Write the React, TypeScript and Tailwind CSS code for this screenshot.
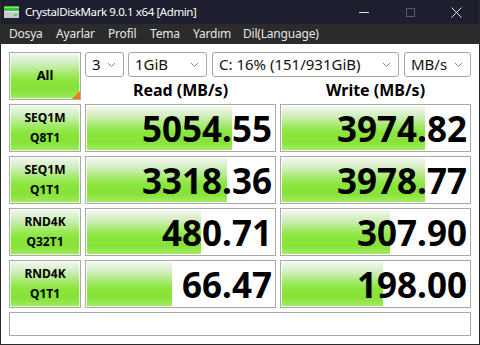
import React from "react";

const font = { fontFamily: '"Noto Sans", "Open Sans", sans-serif' };

const Chevron = () => (
  <svg width="9" height="6" viewBox="0 0 9 6" className="shrink-0">
    <path d="M1 1 L4.5 4.5 L8 1" fill="none" stroke="#8a8a8a" strokeWidth="1" />
  </svg>
);

const Combo = ({ w, text }: { w: string; text: string }) => (
  <div className={`${w} h-[25px] border border-[#a6a6a6] rounded-[3px] bg-white flex items-center justify-between pl-[6px] pr-[7px]`}>
    <span className="text-[15px] leading-none text-[#111]">{text}</span>
    <Chevron />
  </div>
);

const rows = [
  { a: "SEQ1M", b: "Q8T1", r: "5054.55", w: "3974.82", rb: 147, wb: 145 },
  { a: "SEQ1M", b: "Q1T1", r: "3318.36", w: "3978.77", rb: 142, wb: 145 },
  { a: "RND4K", b: "Q32T1", r: "480.71", w: "307.90", rb: 116, wb: 110 },
  { a: "RND4K", b: "Q1T1", r: "66.47", w: "198.00", rb: 87, wb: 103 },
];

const green =
  "bg-[linear-gradient(to_bottom,#f3f7f0_0%,#d2eec0_22%,#a4ea6a_45%,#8ae53c_60%,#88e23a_82%,#a2ec62_100%)]";

const ValueCell = ({ v, bar }: { v: string; bar: number }) => (
  <div className="relative h-[48px] border border-[#a9a9a9] bg-white overflow-hidden">
    <div className={`absolute left-0 top-0 bottom-0 border border-white ${green}`} style={{ width: bar }} />
    <div className="relative h-full flex items-center justify-end pr-[3px]">
      <span className="text-[35px] font-bold leading-none text-black">{v}</span>
    </div>
  </div>
);

export default function App() {
  return (
    <div className="w-[480px] h-[345px] overflow-hidden bg-white flex flex-col border-x border-b border-[#2a2a2a]" style={font}>
      {/* title bar */}
      <div className="h-[24px] bg-[#1d1e2e] flex items-center shrink-0">
        <svg width="18" height="14" viewBox="0 0 18 14" className="ml-[2px]">
          <rect x="1" y="1" width="15" height="5" fill="#3cbf3c" />
          <rect x="1" y="2" width="15" height="1" fill="#7ee07e" />
          <rect x="1" y="6" width="15" height="7" fill="#c8c8c8" />
          <rect x="1" y="6" width="15" height="1" fill="#e8e8e8" />
          <rect x="11" y="9" width="3" height="2" fill="#4fd04f" />
        </svg>
        <span className="ml-[4px] text-[11.5px] tracking-[-0.4px] text-white leading-none">CrystalDiskMark 9.0.1 x64 [Admin]</span>
        <div className="ml-auto flex items-center h-full">
          <div className="w-[46px] flex justify-center">
            <div className="w-[10px] h-px bg-[#e0e0e0]" />
          </div>
          <div className="w-[46px] flex justify-center">
            <div className="w-[9px] h-[9px] border border-[#5a5a66]" />
          </div>
          <div className="w-[46px] flex justify-center">
            <svg width="11" height="11" viewBox="0 0 11 11">
              <path d="M0.5 0.5 L10.5 10.5 M10.5 0.5 L0.5 10.5" stroke="#e8e8e8" strokeWidth="1" />
            </svg>
          </div>
        </div>
      </div>
      {/* menu bar */}
      <div className="h-[20px] bg-[#2b2b2b] flex items-center text-[12px] tracking-[-0.2px] text-[#e6e6e6] leading-none shrink-0 pl-[8px]">
        <span className="w-[47px] shrink-0">Dosya</span>
        <span className="w-[52px] shrink-0">Ayarlar</span>
        <span className="w-[42px] shrink-0">Profil</span>
        <span className="w-[43px] shrink-0">Tema</span>
        <span className="w-[50px] shrink-0">Yardım</span>
        <span>Dil(Language)</span>
      </div>
      {/* content */}
      <div className="flex-1 pt-[8px] pl-[8px] pr-[8px] flex flex-col">
        <div className="grid grid-cols-[72px_191px_191px] gap-x-[4px] gap-y-[4px]">
          {/* All button */}
          <div className={`relative h-[48px] border border-[#a9a9a9] ${green} flex items-center justify-center`}>
            <div className="absolute inset-0 border border-white/70" />
            <span className="relative text-[13px] font-bold text-black">All</span>
            <div className="absolute right-0 bottom-0 w-0 h-0 border-l-[8px] border-l-transparent border-b-[8px] border-b-[#f07a1a]" />
          </div>
          <div className="col-span-2 h-[48px] flex flex-col">
            <div className="flex items-center">
              <Combo w="w-[39px]" text="3" />
              <div className="w-[4px]" />
              <Combo w="w-[79px]" text="1GiB" />
              <div className="w-[5px]" />
              <Combo w="w-[187px]" text="C: 16% (151/931GiB)" />
              <div className="w-[5px]" />
              <Combo w="w-[67px]" text="MB/s" />
            </div>
            <div className="flex-1 grid grid-cols-[191px_191px] gap-x-[4px] items-center">
              <div className="text-center text-[16px] font-bold leading-none text-black pt-[2px]">Read (MB/s)</div>
              <div className="text-center text-[16px] font-bold leading-none text-black pt-[2px]">Write (MB/s)</div>
            </div>
          </div>
          {rows.map((r, i) => (
            <React.Fragment key={i}>
              <div className={`relative h-[48px] border border-[#a9a9a9] ${green} flex flex-col items-center justify-center`}>
                <div className="absolute inset-0 border border-white/70" />
                <span className="relative text-[12px] font-bold leading-[20px] text-black">{r.a}</span>
                <span className="relative text-[12px] font-bold leading-[20px] text-black">{r.b}</span>
              </div>
              <ValueCell v={r.r} bar={r.rb} />
              <ValueCell v={r.w} bar={r.wb} />
            </React.Fragment>
          ))}
        </div>
        <div className="mt-[4px] h-[24px] border border-[#a9a9a9] bg-white" />
      </div>
    </div>
  );
}
